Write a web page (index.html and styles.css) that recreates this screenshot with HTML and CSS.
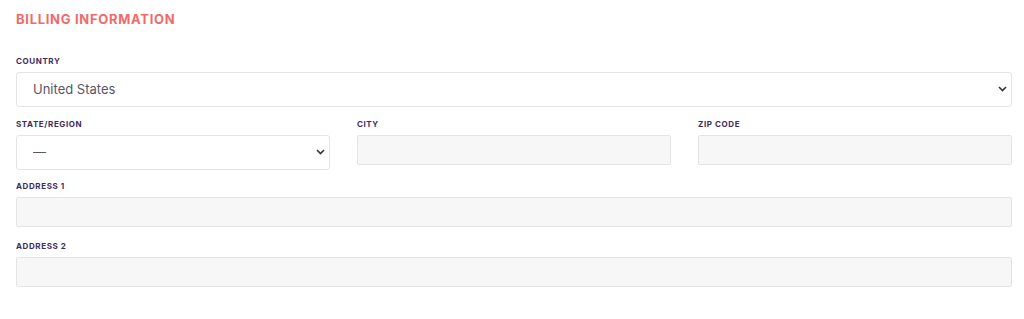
FILE: index.html
```html
<!DOCTYPE html>
<html lang="en">
<head>
  <meta charset="UTF-8">
  <meta name="viewport" content="width=device-width, initial-scale=1.0">
  <title>Billing Information</title>
  <link rel="stylesheet" href="styles.css">
</head>
<body>
  <form class="billing">
    <h2 class="billing-title">Billing Information</h2>

    <div class="field">
      <label class="field-label" for="country">Country</label>
      <div class="select-wrap">
        <select class="select" id="country">
          <option>United States</option>
          <option>Canada</option>
        </select>
        <svg class="chevron" width="9" height="6" viewBox="0 0 9 6"><path d="M1 1l3.5 3.5L8 1" fill="none" stroke="#333" stroke-width="1.6"/></svg>
      </div>
    </div>

    <div class="field-row">
      <div class="field">
        <label class="field-label" for="state">State/Region</label>
        <div class="select-wrap">
          <select class="select" id="state">
            <option>—</option>
          </select>
          <svg class="chevron" width="9" height="6" viewBox="0 0 9 6"><path d="M1 1l3.5 3.5L8 1" fill="none" stroke="#333" stroke-width="1.6"/></svg>
        </div>
      </div>
      <div class="field">
        <label class="field-label" for="city">City</label>
        <input class="input" type="text" id="city">
      </div>
      <div class="field">
        <label class="field-label" for="zip">Zip Code</label>
        <input class="input" type="text" id="zip">
      </div>
    </div>

    <div class="field">
      <label class="field-label" for="address1">Address 1</label>
      <input class="input" type="text" id="address1">
    </div>

    <div class="field">
      <label class="field-label" for="address2">Address 2</label>
      <input class="input" type="text" id="address2">
    </div>
  </form>
</body>
</html>
```

FILE: styles.css
```css
:root {
  --accent: #f06a6a;
  --label-color: #3d2b5e;
  --border-color: #e4e4e4;
  --field-bg: #f7f7f7;
}

body {
  margin: 0;
  font-family: Inter, "Noto Sans", Arial, sans-serif;
  background: #ffffff;
}

.billing {
  width: 996px;
  padding: 10px 12px 0 16px;
}

.billing-title {
  margin: 0 0 28px;
  font-size: 13px;
  line-height: 18px;
  font-weight: 700;
  letter-spacing: 0.7px;
  text-transform: uppercase;
  color: var(--accent);
}

.field {
  display: flex;
  flex-direction: column;
  margin-bottom: 14px;
}

.field-row {
  display: grid;
  grid-template-columns: repeat(3, 1fr);
  gap: 27px;
  align-items: start;
}

.billing > .field:first-of-type {
  margin-bottom: 12px;
}

.field-row .field {
  margin-bottom: 11px;
}

.field-label {
  font-size: 8px;
  line-height: 10px;
  font-weight: 700;
  letter-spacing: 0.6px;
  text-transform: uppercase;
  color: var(--label-color);
  margin-bottom: 6px;
}

.select-wrap {
  position: relative;
}

.select {
  appearance: none;
  -webkit-appearance: none;
  width: 100%;
  height: 35px;
  padding: 0 30px 2px 16px;
  border: 1px solid var(--border-color);
  border-radius: 3px;
  background: #ffffff;
  font-family: inherit;
  font-size: 13px;
  color: #5a5566;
  box-sizing: border-box;
}

.chevron {
  position: absolute;
  right: 5px;
  top: 14px;
  pointer-events: none;
}

.input {
  height: 30px;
  width: 100%;
  border: 1px solid var(--border-color);
  border-radius: 2px;
  background: var(--field-bg);
  box-sizing: border-box;
}
```
